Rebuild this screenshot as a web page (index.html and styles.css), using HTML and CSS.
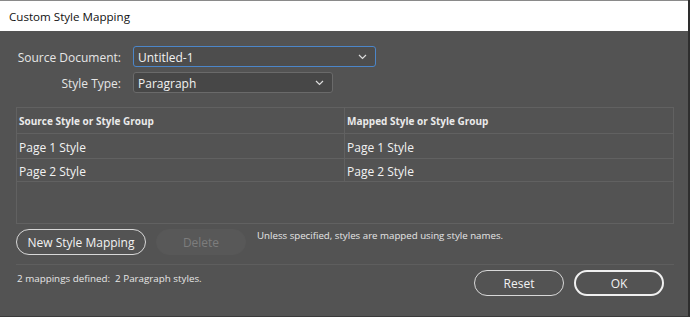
FILE: index.html
```html
<!DOCTYPE html>
<html lang="en">
  <head>
    <meta charset="UTF-8" />
    <title>Custom Style Mapping</title>
    <link rel="stylesheet" href="styles.css">
  </head>
  <body>
    <div class="dialog">
      <div class="titlebar">Custom Style Mapping</div>

      <div class="content">
        <div class="form">
          <label for="source-doc">Source Document:</label>
          <div class="select focused" id="source-doc">
            <span>Untitled-1</span>
            <svg class="chevron" width="9" height="6" viewBox="0 0 9 6"><path d="M1 1 L4.5 4.5 L8 1" fill="none" stroke="#ddd" stroke-width="1.2"/></svg>
          </div>
          <label for="style-type">Style Type:</label>
          <div class="select short" id="style-type">
            <span>Paragraph</span>
            <svg class="chevron" width="9" height="6" viewBox="0 0 9 6"><path d="M1 1 L4.5 4.5 L8 1" fill="none" stroke="#ddd" stroke-width="1.2"/></svg>
          </div>
        </div>

        <div class="table">
          <div class="row head">
            <div class="cell">Source Style or Style Group</div>
            <div class="cell">Mapped Style or Style Group</div>
          </div>
          <div class="row">
            <div class="cell">Page 1 Style</div>
            <div class="cell">Page 1 Style</div>
          </div>
          <div class="row last">
            <div class="cell">Page 2 Style</div>
            <div class="cell">Page 2 Style</div>
          </div>
        </div>

        <div class="actions">
          <button class="btn">New Style Mapping</button>
          <button class="btn disabled">Delete</button>
          <span class="note">Unless specified, styles are mapped using style names.</span>
        </div>

        <div class="footer">
          <span class="status">2 mappings defined:&nbsp; 2 Paragraph styles.</span>
          <div class="buttons">
            <button class="btn small">Reset</button>
            <button class="btn small primary">OK</button>
          </div>
        </div>
      </div>
    </div>
  </body>
</html>
```

FILE: styles.css
```css
body {
  margin: 0;
  background: #2b2b2b;
  font-family: "Open Sans", "Noto Sans", sans-serif;
}

.dialog {
  width: 688px;
  height: 316px;
  background: #535353;
  border-right: 2px solid #2e2e2e;
  border-bottom: 1px solid #3a3a3a;
  overflow: hidden;
}

.titlebar {
  height: 30px;
  background: #ffffff;
  border-top: 1px solid #8a8a8a;
  padding-left: 9px;
  font-size: 11.6px;
  line-height: 31px;
  color: #111;
}

.content {
  padding: 15px 16px 0 16px;
}

.form {
  display: grid;
  grid-template-columns: 105px auto;
  column-gap: 12px;
  row-gap: 5px;
  justify-content: start;
  align-items: center;
}

.form label {
  text-align: right;
  font-size: 12px;
  color: #e6e6e6;
  padding-top: 2px;
}

.select {
  height: 21px;
  box-sizing: border-box;
  border: 1px solid #6a6a6a;
  border-radius: 3px;
  background: #474747;
  display: flex;
  align-items: center;
  justify-content: space-between;
  padding: 2px 8px 0 4px;
  font-size: 12px;
  color: #f2f2f2;
  width: 243px;
}

.select .chevron {
  margin-top: -2px;
}

.select.focused {
  border-color: #4c86c9;
  background: #4d4d4d;
}

.select.short {
  width: 200px;
}

.table {
  margin-top: 14px;
  width: 658px;
  height: 117px;
  box-sizing: border-box;
  border: 1px solid #616161;
}

.row {
  display: grid;
  grid-template-columns: 328px 1fr;
  height: 24px;
  border-bottom: 1px solid #616161;
  font-size: 12px;
  color: #f2f2f2;
}

.row.head {
  height: 25px;
  font-size: 10px;
  font-weight: bold;
  color: #eaeaea;
}

.row.last {
  height: 22px;
}

.row .cell {
  padding: 3px 0 0 2px;
  box-sizing: border-box;
  display: flex;
  align-items: center;
}

.row.head .cell {
  padding-top: 1px;
}

.row .cell:first-child {
  border-right: 1px solid #616161;
}

.btn {
  font-family: inherit;
  font-size: 12px;
  color: #f2f2f2;
  background: transparent;
  border: 1px solid #d8d8d8;
  border-radius: 13px;
  height: 26px;
  padding: 0 10px;
  cursor: pointer;
}

.btn.disabled {
  border-color: #585858;
  background: #585858;
  color: #7d7d7d;
  width: 90px;
}

.actions {
  display: flex;
  align-items: center;
  gap: 10px;
  margin-top: 5px;
  height: 26px;
  padding-bottom: 9px;
  border-bottom: 1px solid #5e5e5e;
  width: 658px;
}

.actions .btn:first-child {
  width: 130px;
}

.note {
  font-size: 9.7px;
  color: #e6e6e6;
  margin-left: 1px;
  align-self: flex-start;
  margin-top: 0;
}

.footer {
  display: flex;
  justify-content: space-between;
  align-items: flex-start;
  width: 648px;
  padding-top: 5px;
}

.status {
  font-size: 9.8px;
  color: #e6e6e6;
  margin-top: 2px;
  padding-left: 1px;
}

.buttons {
  display: flex;
  gap: 10px;
}

.btn.small {
  width: 90px;
}

.btn.primary {
  border: 2px solid #f0f0f0;
}
```
